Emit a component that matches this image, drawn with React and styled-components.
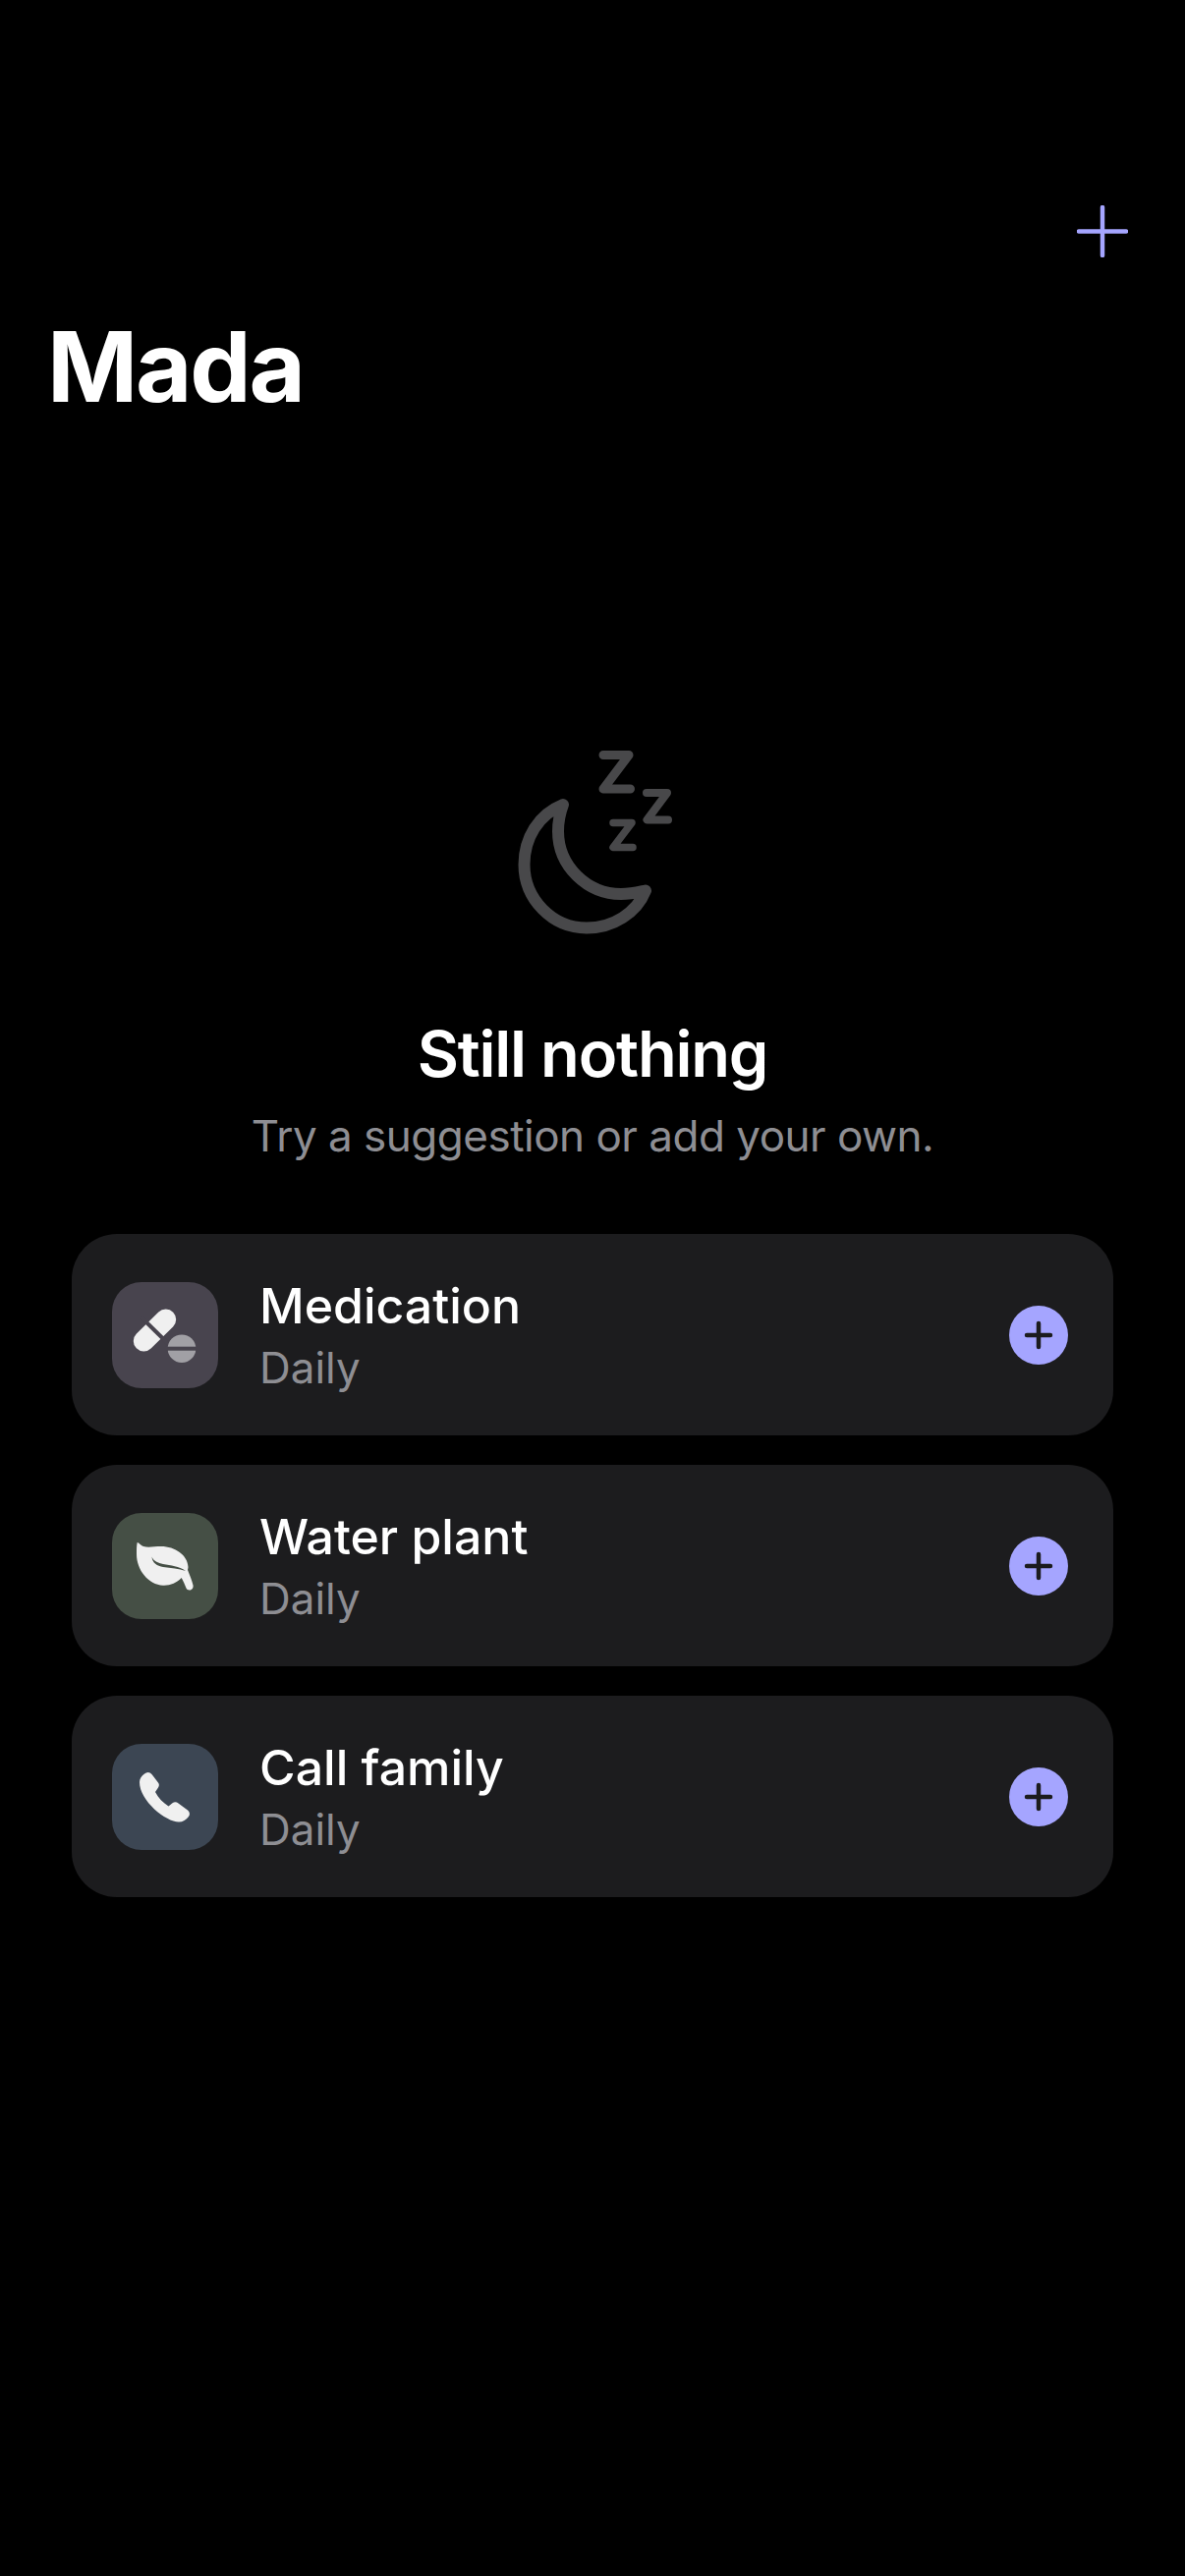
import styled, { createGlobalStyle } from "styled-components";

const GlobalStyle = createGlobalStyle`
  * {
    box-sizing: border-box;
  }
  html,
  body {
    margin: 0;
    padding: 0;
    background: #000000;
  }
  body {
    font-family: Inter, "Liberation Sans", sans-serif;
    -webkit-font-smoothing: antialiased;
  }
`;

const Screen = styled.div`
  width: 1206px;
  height: 2622px;
  overflow: hidden;
  background: #000000;
  color: #ffffff;
  display: flex;
  flex-direction: column;
`;

const TopBar = styled.div`
  display: flex;
  justify-content: flex-end;
  padding: 209px 58px 0 0;
`;

const IconButton = styled.button`
  width: 52px;
  height: 53px;
  padding: 0;
  border: 0;
  background: none;
  display: block;
`;

const PageTitle = styled.h1`
  margin: 51px 0 0;
  padding-left: 48px;
  font-size: 99px;
  line-height: 120px;
  font-weight: 700;
  letter-spacing: -2.2px;
`;

const EmptyState = styled.section`
  margin-top: 308px;
  display: flex;
  flex-direction: column;
  align-items: center;
`;

const MoonArt = styled.svg`
  display: block;
  width: 200px;
  height: 220px;
`;

const EmptyTitle = styled.h2`
  margin: 72px 0 0;
  font-size: 65px;
  line-height: 80px;
  font-weight: 600;
  letter-spacing: -1.2px;
`;

const EmptyText = styled.p`
  margin: 15px 0 0;
  font-size: 44px;
  line-height: 56px;
  font-weight: 400;
  letter-spacing: -0.5px;
  color: #8e8e93;
`;

const SuggestionList = styled.ul`
  list-style: none;
  margin: 72px 73px 0;
  padding: 0;
  display: flex;
  flex-direction: column;
  gap: 30px;
`;

const Card = styled.li`
  height: 205px;
  border-radius: 46px;
  background: #1c1c1e;
  display: flex;
  align-items: center;
  padding: 0 46px 0 41px;
`;

const Tile = styled.div`
  width: 108px;
  height: 108px;
  flex: none;
  border-radius: 30px;
  background: ${(p) => p.$bg};
`;

const TileIcon = styled.svg`
  display: block;
  width: 108px;
  height: 108px;
`;

const CardText = styled.div`
  flex: 1;
  margin-left: 42px;
`;

const CardTitle = styled.div`
  font-size: 50px;
  line-height: 64px;
  font-weight: 500;
`;

const CardSub = styled.div`
  margin-top: 3px;
  font-size: 44px;
  line-height: 56px;
  color: #8e8e93;
`;

const AddButton = styled.button`
  width: 60px;
  height: 60px;
  flex: none;
  padding: 0;
  border: 0;
  border-radius: 50%;
  background: #a5a5ff;
  display: flex;
  align-items: center;
  justify-content: center;
`;

const PillIcon = ({ bg }) => (
  <TileIcon viewBox="0 0 108 108">
    <line x1="32.3" y1="60" x2="54.7" y2="38" stroke="#f0f0f0" strokeWidth="21" strokeLinecap="round" />
    <line x1="30" y1="36" x2="58" y2="63.5" stroke={bg} strokeWidth="4" />
    <circle cx="71" cy="67.7" r="14.3" fill="#a1a0a5" />
    <rect x="54" y="65.7" width="34" height="4" fill={bg} />
  </TileIcon>
);

const LeafIcon = ({ bg }) => (
  <TileIcon viewBox="0 0 108 108">
    <path
      fill="#f0f0f0"
      d="M25.7 30 C27.5 30 29 33 32 34 C37 35.5 43 34 50 34 C64 34 77 43 77.5 55 C77.5 56 77 57.5 77 58 C79 63 81.5 69 82.5 73.5 C83 76 81.5 78.5 79 78.5 C77 78.5 76 77.5 75.5 76.5 C74 73 72.5 69 70.7 66 C66 71 59 74 52 73.7 C37 73 25 58 25 42 C25 37 25 33 25.7 30 Z"
    />
    <path
      fill={bg}
      d="M40.5 44.5 C42 49 47 51 52 52 C60 53.5 68 54 75 59 C68 56.5 60 56 52 55 C46 54 41 51 40.5 44.5 Z"
    />
  </TileIcon>
);

const PhoneIcon = () => (
  <TileIcon viewBox="0 0 108 108">
    <path
      fill="#f0f0f0"
      d="M33 30.5 C35.5 28.3 38.5 28.5 40.5 31 L47 39.5 C48.3 41.2 48 43 47 44.5 L44 49 C47 55 52 60 57.5 63.5 L61.5 60.3 C63.5 59 65.5 59 67.5 60.5 L77 67.5 C79.3 69.3 79.5 72 78 74 C75.5 77.5 72 79.5 68 79.5 C55 79.5 28 58 28 39 C28 35.5 30 32.5 33 30.5 Z"
    />
  </TileIcon>
);

const suggestions = [
  { id: 1, title: "Medication", bg: "#48444e", Icon: PillIcon },
  { id: 2, title: "Water plant", bg: "#454f45", Icon: LeafIcon },
  { id: 3, title: "Call family", bg: "#3c4653", Icon: PhoneIcon },
];

function App() {
  return (
    <>
      <GlobalStyle />
      <Screen>
        <TopBar>
          <IconButton aria-label="Add">
            <svg width="52" height="53" viewBox="0 0 52 53">
              <path d="M26 2 V51 M2 26.5 H50" stroke="#a5a5ff" strokeWidth="4.5" strokeLinecap="round" fill="none" />
            </svg>
          </IconButton>
        </TopBar>
        <PageTitle>Mada</PageTitle>

        <EmptyState>
          <MoonArt viewBox="3 0 200 220">
            <g fill="none" stroke="#48484a" strokeLinecap="round" strokeLinejoin="round">
              <path
                strokeWidth="12"
                d="M73 78 C48 88 33.5 112 33.5 139 C33.5 174 62 203.5 97 203.5 C124 203.5 148 188 157 165.5 C150 167 143 169 132 169 C98 169 68 141 68 105 C68 95 70 86 73 78 Z"
              />
              <path strokeWidth="9" d="M114 27.5 H140 L114 62 H141.5" />
              <path strokeWidth="8" d="M158 66 H179 L158.5 93.5 H180" />
              <path strokeWidth="7.5" d="M124 96.5 H143 L124 121.5 H144" />
            </g>
          </MoonArt>
          <EmptyTitle>Still nothing</EmptyTitle>
          <EmptyText>Try a suggestion or add your own.</EmptyText>
        </EmptyState>

        <SuggestionList>
          {suggestions.map(({ id, title, bg, Icon }) => (
            <Card key={id}>
              <Tile $bg={bg}>
                <Icon bg={bg} />
              </Tile>
              <CardText>
                <CardTitle>{title}</CardTitle>
                <CardSub>Daily</CardSub>
              </CardText>
              <AddButton aria-label={`Add ${title}`}>
                <svg width="30" height="30" viewBox="0 0 30 30">
                  <path d="M15 3 V27 M3 15 H27" stroke="#1c1c1e" strokeWidth="4.5" strokeLinecap="round" fill="none" />
                </svg>
              </AddButton>
            </Card>
          ))}
        </SuggestionList>
      </Screen>
    </>
  );
}

export default App;
